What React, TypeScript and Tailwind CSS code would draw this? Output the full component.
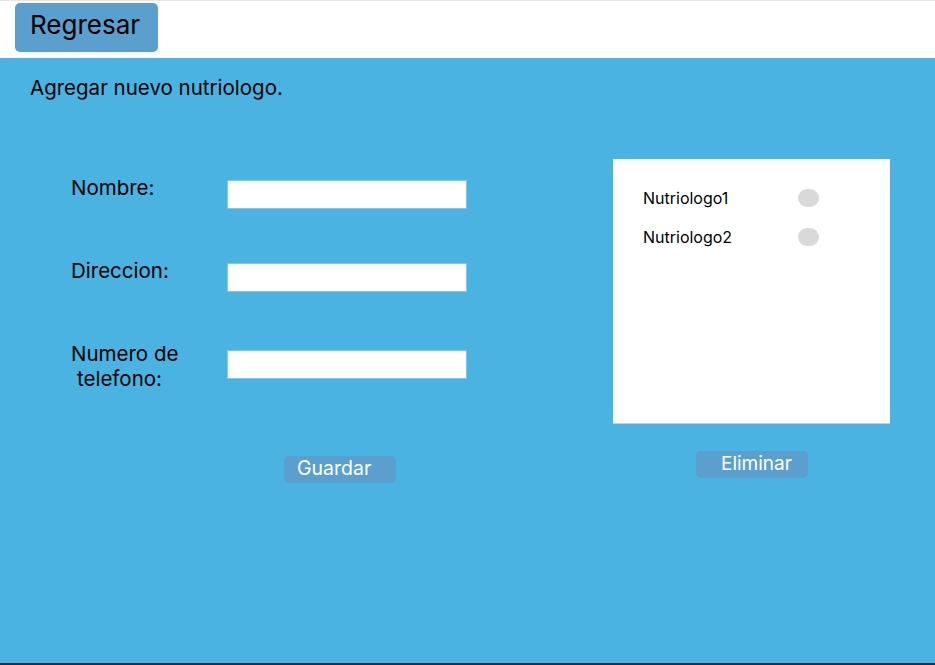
import React from "react";

const Field = ({
  label,
  top,
  inputTop,
}: {
  label: React.ReactNode;
  top: string;
  inputTop: string;
}) => (
  <div className={`flex items-start ${top}`}>
    <div className="w-[156px] text-[20.5px] leading-[25px] text-black">{label}</div>
    <input type="text" className={`w-[240px] h-[29px] bg-white outline-none border border-[#7fc6e8] ${inputTop}`} />
  </div>
);

const App = () => {
  const names = ["Nutriologo1", "Nutriologo2"];
  return (
    <div className="w-[935px] h-[665px] flex flex-col bg-white font-['Inter',sans-serif] overflow-hidden">
      <div className="h-[58px] shrink-0 border-t border-[#e6e6e6] pl-[15px] pt-[2px] shadow-[0_1px_2px_rgba(0,0,0,0.08)]">
        <button className="w-[143px] h-[49px] rounded-[5px] bg-[#5b9fcf] text-black text-[26px] leading-[30px] text-left pl-[15px] pb-[6px]">
          Regresar
        </button>
      </div>
      <div className="flex-1 bg-[#4ab3e1] border-b-2 border-[#1f2d3a]">
        <p className="pl-[30px] pt-[17px] text-[20.5px] leading-[26px] text-black">Agregar nuevo nutriologo.</p>
        <div className="flex mt-[58px]">
          <div className="pl-[71px] pt-[16px]">
            <Field label="Nombre:" top="" inputTop="mt-[5px]" />
            <Field label="Direccion:" top="mt-[49px]" inputTop="mt-[5px]" />
            <Field
              label={
                <>
                  Numero de
                  <br />
                  <span className="pl-[6px]">telefono:</span>
                </>
              }
              top="mt-[49px]"
              inputTop="mt-[9px]"
            />
            <button className="ml-[213px] mt-[65px] w-[112px] h-[27px] rounded-[5px] bg-[#5b9fcf] text-white text-[19.5px] leading-[23px] text-left pl-[13px] pb-[3px]">
              Guardar
            </button>
          </div>
          <div className="ml-[146px] flex flex-col">
            <div className="w-[277px] h-[265px] bg-white border-b border-[#a9dcf2] pt-[28px] pl-[30px]">
              {names.map((n) => (
                <div key={n} className="flex items-center h-[21px] mb-[18px]">
                  <span className="w-[155px] text-[16px] text-black">{n}</span>
                  <span className="w-[21px] h-[18px] rounded-full bg-[#d9d9d9]" />
                </div>
              ))}
            </div>
            <button className="ml-[83px] mt-[27px] w-[112px] h-[27px] rounded-[5px] bg-[#5b9fcf] text-white text-[19px] leading-[23px] text-left pl-[25px] pb-[3px]">
              Eliminar
            </button>
          </div>
        </div>
      </div>
    </div>
  );
};

export default App;
